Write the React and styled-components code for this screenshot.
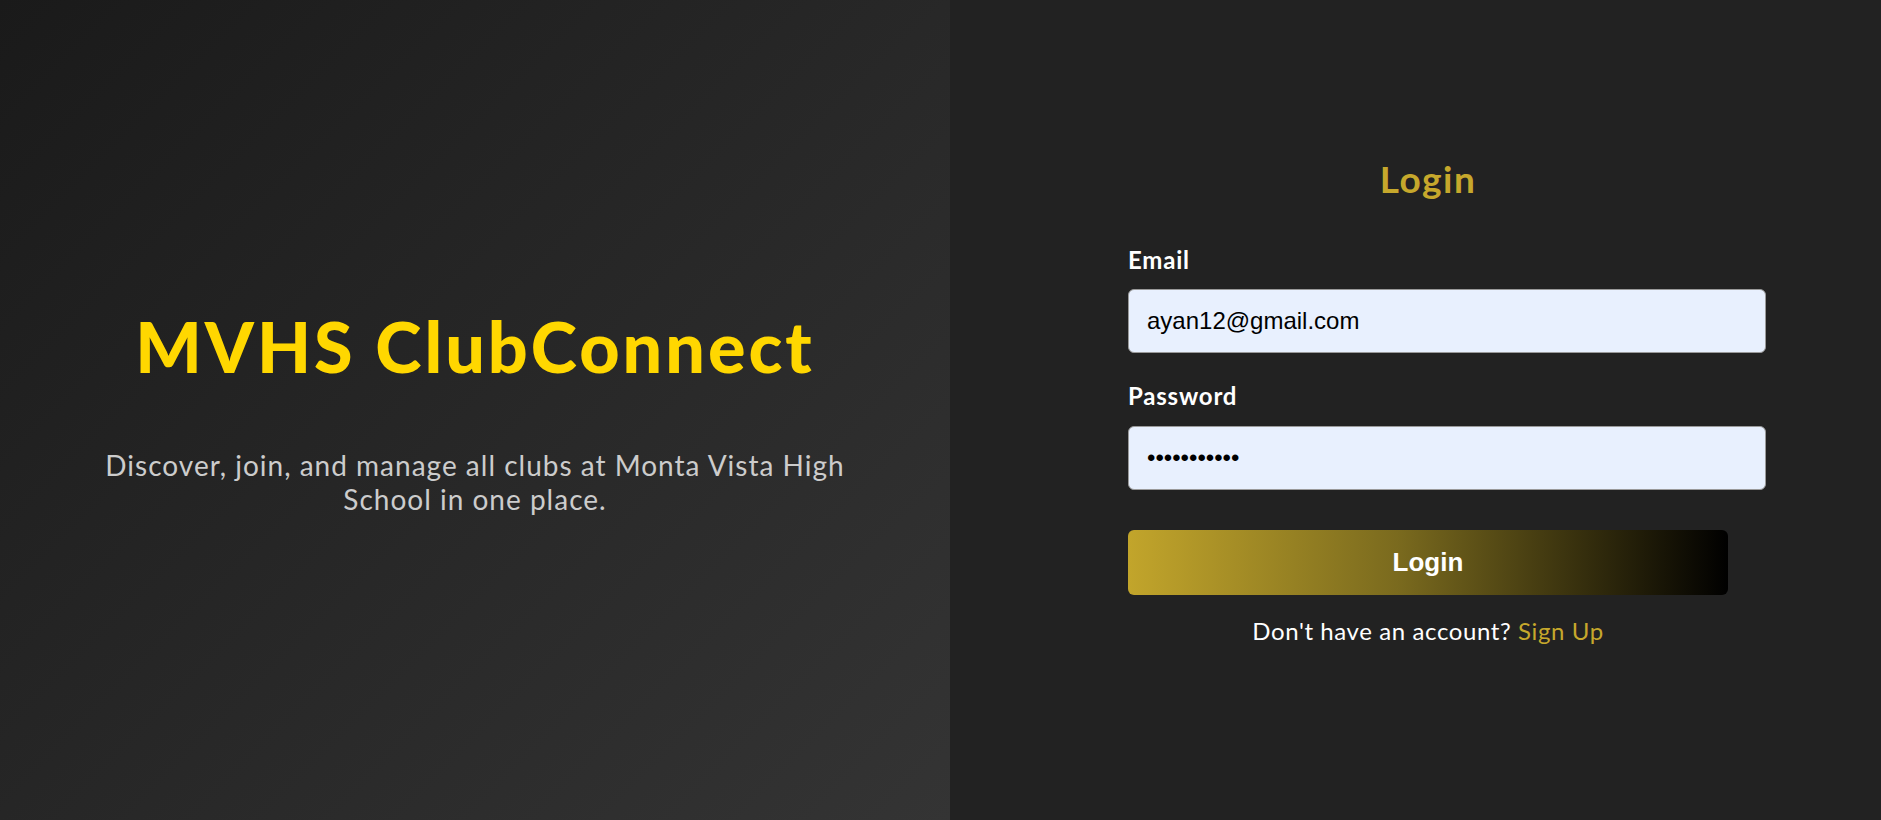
import React from "react";
import styled, { createGlobalStyle } from "styled-components";

const GlobalStyle = createGlobalStyle`
  html, body {
    margin: 0;
    padding: 0;
    background: #222222;
  }
  * {
    font-family: "Lato", "Open Sans", sans-serif;
  }
`;

const Page = styled.div`
  display: flex;
  flex-direction: row;
  width: 100%;
  height: 100vh;
  overflow: hidden;
`;

const Hero = styled.div`
  width: 950px;
  flex-shrink: 0;
  display: flex;
  flex-direction: column;
  align-items: center;
  justify-content: center;
  text-align: center;
  background: linear-gradient(135deg, #1a1a1a 0%, #343434 100%);
  padding: 0 40px;
  box-sizing: border-box;
`;

const AppTitle = styled.h1`
  margin: 0;
  color: #ffd700;
  font-size: 70px;
  font-weight: 900;
  line-height: 1.2;
  letter-spacing: 3px;
`;

const Tagline = styled.p`
  margin: 60px 0 0;
  max-width: 770px;
  color: #cccccc;
  font-size: 28px;
  font-weight: 400;
  line-height: 34px;
  letter-spacing: 1px;
`;

const FormSide = styled.div`
  flex: 1;
  display: flex;
  align-items: center;
  justify-content: center;
  background: #222222;
  padding: 0 0 17px 25px;
`;

const Form = styled.form`
  width: 600px;
  display: flex;
  flex-direction: column;
`;

const FormTitle = styled.h2`
  margin: 0 0 44px;
  color: #c6a82c;
  text-align: center;
  font-size: 37px;
  font-weight: 700;
  line-height: 1.2;
  letter-spacing: 1.5px;
`;

const Label = styled.label`
  color: #ffffff;
  font-size: 24px;
  font-weight: 700;
  line-height: 1.2;
  letter-spacing: 0.8px;
  margin: ${(p) => (p.$first ? "0" : "29px")} 0 15px;
`;

const Field = styled.input`
  width: 100%;
  box-sizing: content-box;
  margin: 0;
  padding: 17px 18px;
  border: 1px solid #9a9a9a;
  border-radius: 6px;
  background: #e8f0fe;
  color: #000000;
  font-family: "Liberation Sans", Arial, sans-serif;
  font-size: 24px;
  outline: none;
`;

const SubmitButton = styled.button`
  margin-top: 40px;
  width: 600px;
  height: 65px;
  border: none;
  border-radius: 6px;
  background: linear-gradient(to right, #c2a52b 0%, #7a6a1e 45%, #000000 100%);
  color: #ffffff;
  font-family: "Liberation Sans", Arial, sans-serif;
  font-size: 26px;
  font-weight: 700;
  cursor: pointer;
`;

const SwitchText = styled.p`
  margin: 22px 0 0;
  text-align: center;
  color: #ffffff;
  font-size: 24px;
  line-height: 1.2;
  letter-spacing: 0.6px;
`;

const SwitchLink = styled.a`
  color: #c6a82c;
  text-decoration: none;
  cursor: pointer;
`;

export default function App() {
  return (
    <>
      <GlobalStyle />
      <Page>
        <Hero>
          <AppTitle>MVHS ClubConnect</AppTitle>
          <Tagline>
            Discover, join, and manage all clubs at Monta Vista High School in
            one place.
          </Tagline>
        </Hero>
        <FormSide>
          <Form onSubmit={(e) => e.preventDefault()}>
            <FormTitle>Login</FormTitle>
            <Label $first htmlFor="email">Email</Label>
            <Field id="email" type="email" defaultValue="ayan12@gmail.com" />
            <Label htmlFor="password">Password</Label>
            <Field id="password" type="password" defaultValue="ayan1234567" />
            <SubmitButton type="submit">Login</SubmitButton>
            <SwitchText>
              Don't have an account? <SwitchLink>Sign Up</SwitchLink>
            </SwitchText>
          </Form>
        </FormSide>
      </Page>
    </>
  );
}
